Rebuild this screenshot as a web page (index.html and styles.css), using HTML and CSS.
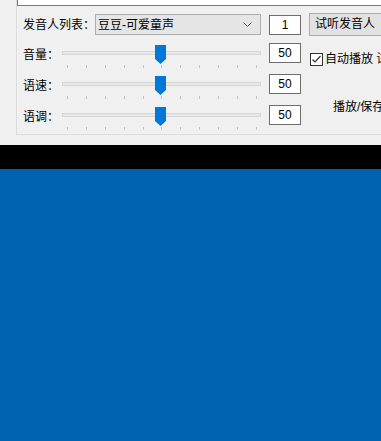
FILE: index.html
```html
<!DOCTYPE html>
<html lang="zh">
<head>
<meta charset="utf-8">
<link rel="stylesheet" href="styles.css">
</head>
<body>
<div class="app">
  <div class="group">
    <div class="top-input"></div>
    <div class="row1">
      <span class="lbl">发音人列表：</span>
      <div class="select">
        <span>豆豆-可爱童声</span>
        <svg class="chev" width="9" height="5" viewBox="0 0 9 5"><polyline points="0.5,0.5 4.5,4.5 8.5,0.5" fill="none" stroke="#606060" stroke-width="1"/></svg>
      </div>
      <div class="numbox">1</div>
      <div class="btn">试听发音人</div>
    </div>
    <div class="controls">
      <div class="sliders">
        <div class="srow">
          <span class="slbl">音量：</span>
          <div class="slider">
            <div class="track"></div>
            <div class="ticks"><i></i><i></i><i></i><i></i><i></i><i></i><i></i><i></i><i></i><i></i><i></i></div>
            <svg class="thumb" width="11" height="19" viewBox="0 0 11 19"><path d="M0 0H11V14L5.5 19L0 14Z" fill="#0078d7"/></svg>
          </div>
          <div class="numbox">50</div>
        </div>
        <div class="srow">
          <span class="slbl">语速：</span>
          <div class="slider">
            <div class="track"></div>
            <div class="ticks"><i></i><i></i><i></i><i></i><i></i><i></i><i></i><i></i><i></i><i></i><i></i></div>
            <svg class="thumb" width="11" height="19" viewBox="0 0 11 19"><path d="M0 0H11V14L5.5 19L0 14Z" fill="#0078d7"/></svg>
          </div>
          <div class="numbox">50</div>
        </div>
        <div class="srow">
          <span class="slbl">语调：</span>
          <div class="slider">
            <div class="track"></div>
            <div class="ticks"><i></i><i></i><i></i><i></i><i></i><i></i><i></i><i></i><i></i><i></i><i></i></div>
            <svg class="thumb" width="11" height="19" viewBox="0 0 11 19"><path d="M0 0H11V14L5.5 19L0 14Z" fill="#0078d7"/></svg>
          </div>
          <div class="numbox">50</div>
        </div>
      </div>
      <div class="side">
        <label class="check">
          <svg class="cb" width="13" height="13" viewBox="0 0 13 13"><rect x="0.5" y="0.5" width="12" height="12" fill="#fff" stroke="#333"/><polyline points="2.5,6.5 5,9 10.5,3" fill="none" stroke="#333" stroke-width="1.2"/></svg>
          <span>自动播放 试听</span>
        </label>
        <div class="play">播放/保存进度</div>
      </div>
    </div>
  </div>
</div>
<div class="black"></div>
<div class="blue"></div>
</body>
</html>
```

FILE: styles.css
```css
html, body {
  margin: 0;
  padding: 0;
}
body {
  width: 381px;
  height: 441px;
  overflow: hidden;
  background: #0063b1;
  font-family: "Liberation Sans", "Noto Sans CJK SC", sans-serif;
  font-size: 12px;
  color: #000;
}
.app {
  height: 145px;
  background: #f0f0f0;
  overflow: hidden;
}
.group {
  margin-left: 16px;
  width: 420px;
  height: 134px;
  border-left: 1px solid #dcdcdc;
  border-bottom: 1px solid #dcdcdc;
}
.top-input {
  height: 5px;
  background: #fff;
  border-left: 1px solid #7a7a7a;
  border-bottom: 1px solid #7a7a7a;
}
.row1 {
  display: flex;
  align-items: center;
  height: 23px;
  margin-top: 7px;
  padding-left: 6px;
}
.lbl {
  width: 72px;
  line-height: 16px;
  white-space: nowrap;
}
.select {
  box-sizing: border-box;
  width: 166px;
  height: 21px;
  background: #e5e5e5;
  border: 1px solid #adadad;
  display: flex;
  align-items: center;
  justify-content: space-between;
  padding: 0 8px 0 2px;
  line-height: 16px;
}
.chev {
  display: block;
}
.numbox {
  box-sizing: border-box;
  width: 32px;
  height: 20px;
  margin-left: 8px;
  background: #fff;
  border: 1px solid #6e6e6e;
  text-align: center;
  line-height: 18px;
  flex: none;
}
.btn {
  box-sizing: border-box;
  margin-left: 8px;
  height: 23px;
  width: 80px;
  background: #e1e1e1;
  border: 1px solid #adadad;
  padding-left: 5px;
  line-height: 21px;
  white-space: nowrap;
  flex: none;
}
.controls {
  display: flex;
  margin-top: 7px;
}
.sliders {
  display: flex;
  flex-direction: column;
  padding-left: 6px;
}
.srow {
  display: flex;
  align-items: flex-start;
  height: 31px;
}
.slbl {
  width: 39px;
  margin-top: 4px;
  line-height: 16px;
  white-space: nowrap;
}
.slider {
  position: relative;
  width: 199px;
  height: 31px;
}
.track {
  box-sizing: border-box;
  margin-top: 8px;
  height: 4px;
  background: #e7e7e7;
  border: 1px solid #d6d6d6;
}
.ticks {
  display: flex;
  justify-content: space-between;
  padding: 0 4px 0 5px;
  margin-top: 10px;
  height: 3px;
}
.ticks i {
  display: block;
  width: 1px;
  height: 3px;
  background: #c4c4c4;
}
.thumb {
  position: absolute;
  left: 93px;
  top: 2px;
  display: block;
}
.side {
  margin-left: 9px;
  display: flex;
  flex-direction: column;
  white-space: nowrap;
}
.check {
  display: flex;
  align-items: center;
  margin-top: 8px;
  height: 16px;
  line-height: 16px;
}
.cb {
  display: block;
  margin-right: 2px;
}
.play {
  margin-top: 32px;
  margin-left: 23px;
  line-height: 16px;
}
.black {
  height: 24px;
  background: #000;
}
.blue {
  height: 272px;
  background: #0063b1;
}
```
